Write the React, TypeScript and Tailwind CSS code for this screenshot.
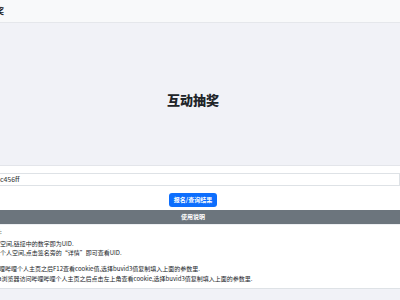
const App = () => {
  return (
    <div
      className="w-[400px] h-[300px] overflow-hidden bg-[#f1f2f7] text-[#212529]"
      style={{ fontFamily: '"Noto Sans CJK SC", "Liberation Sans", sans-serif' }}
    >
      <div className="-ml-[14px] w-[414px]">
        {/* Top bar */}
        <header className="h-[23px] bg-[#f8f9fa] border-b border-[#e5e7eb] flex items-center">
          <span className="-ml-[14px] text-[8px] font-bold leading-none">互动抽奖</span>
        </header>

        {/* Hero */}
        <section className="h-[142px] flex items-center justify-center pt-[10px]">
          <h1 className="text-[13px] font-black leading-none text-[#212529]">互动抽奖</h1>
        </section>

        <main className="bg-white border-t border-[#e3e5ea]">
          {/* Input */}
          <div className="pt-[7px]">
            <div className="h-[13px] border border-[#dee2e6] bg-white pl-[9px] flex items-center text-[7px] leading-none text-[#333]">
              2c456ff
            </div>
          </div>

          <div className="flex justify-center pt-[7px] pb-[3px]">
            <button className="h-[14px] px-[5px] rounded-[3px] bg-[#0d6efd] text-white text-[6px] font-semibold leading-none">
              报名/查询结果
            </button>
          </div>

          <div className="h-[14px] bg-[#6c757d] text-white text-[6px] font-bold flex items-center justify-center leading-none">
            使用说明
          </div>

          {/* Instructions */}
          <div className="h-[65px] border-t border-[#eef0f3] border-b border-b-[#dee2e6] pt-[2px] text-[6px] leading-[9px] text-[#212529] whitespace-nowrap">
            <div className="ml-[-10px]">
              <p>使用说明:</p>
              <p className="mt-[3px]">打开个人空间,链接中的数字即为UID.</p>
              <p>或者进入个人空间,点击签名旁的“详情”即可查看UID.</p>
              <p className="mt-[7px]">1.访问哔哩哔哩个人主页之后F12查看cookie值,选择buvid3值复制填入上面的参数里.</p>
              <p className="mt-[1px]">2.使用Via浏览器访问哔哩哔哩个人主页之后点击左上角查看cookie,选择buvid3值复制填入上面的参数里.</p>
            </div>
          </div>
        </main>
      </div>
    </div>
  );
};

export default App;
